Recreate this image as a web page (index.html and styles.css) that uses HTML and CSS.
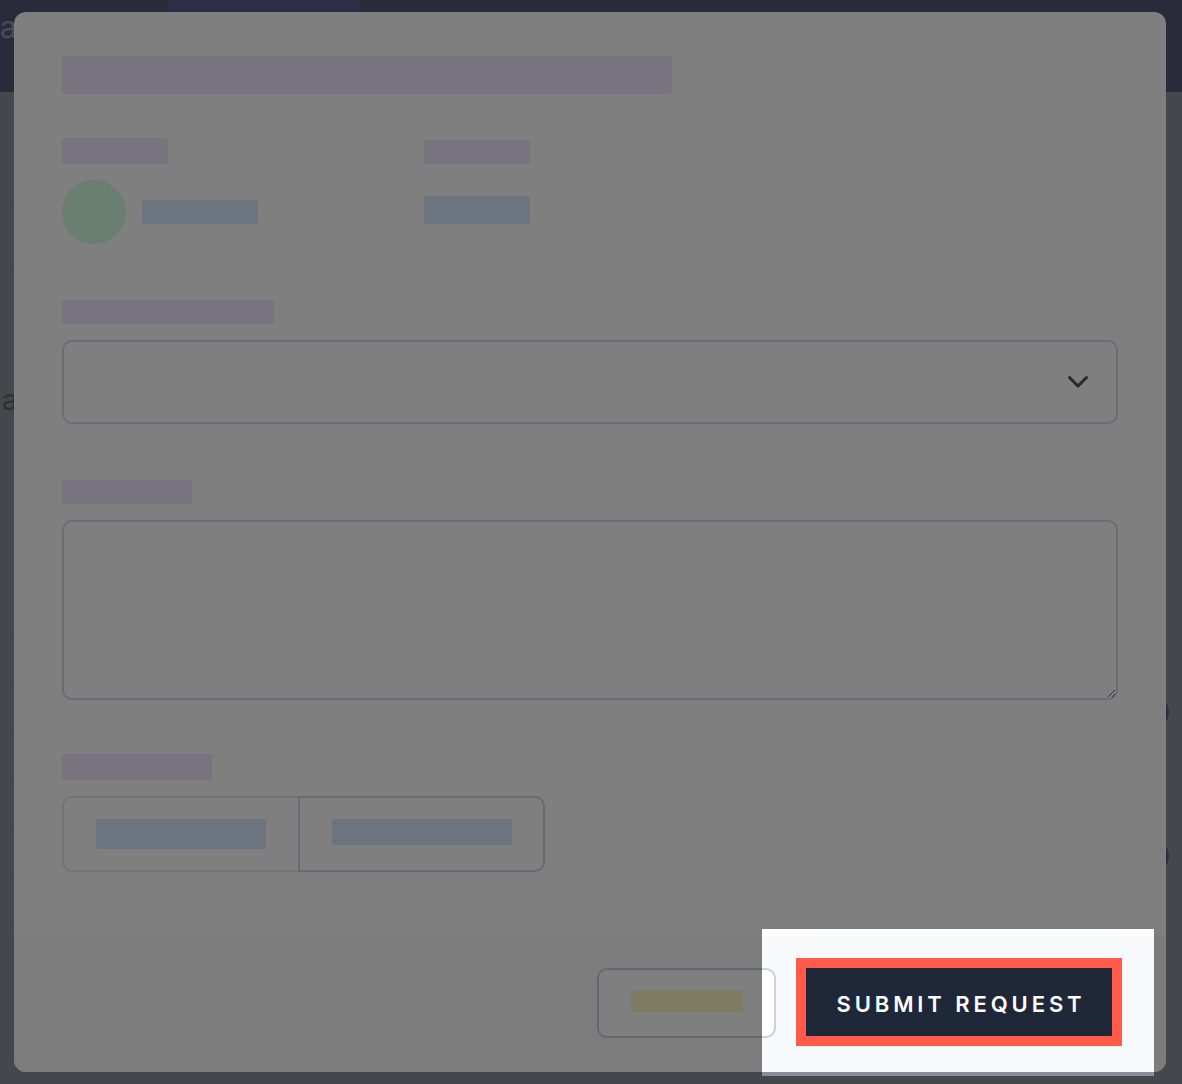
FILE: index.html
```html
<!DOCTYPE html>
<html lang="en">
<head>
    <meta charset="UTF-8">
    <meta name="viewport" content="width=device-width, initial-scale=1.0">
    <title>New Request</title>
    <link rel="stylesheet" href="styles.css">
</head>
<body>
    <!-- page behind the dialog -->
    <div class="app">
        <header class="topbar">
            <span class="brand">a</span>
            <div class="tab-active"></div>
        </header>
        <main class="page">
            <div class="row row-head"></div>
            <div class="row row-sub"></div>
            <div class="row row-main"><span class="page-text">a</span></div>
            <div class="row"></div>
            <div class="row"><span class="dot"></span></div>
            <div class="row"></div>
            <div class="row"></div>
            <div class="row"><span class="dot"></span></div>
            <div class="row"></div>
        </main>
    </div>

    <div class="backdrop">
        <div class="modal">
            <div class="modal-body">
                <div class="bar bar-title"></div>

                <div class="meta">
                    <div class="meta-col">
                        <div class="bar bar-label" style="width: 106px; height: 26px;"></div>
                        <div class="meta-value">
                            <span class="avatar"></span>
                            <div class="bar bar-value" style="width: 116px; height: 24px;"></div>
                        </div>
                    </div>
                    <div class="meta-col meta-col-2">
                        <div class="bar bar-label" style="width: 106px; height: 24px;"></div>
                        <div class="meta-value">
                            <div class="bar bar-value" style="width: 106px; height: 28px;"></div>
                        </div>
                    </div>
                </div>

                <div class="field">
                    <div class="bar bar-label" style="width: 212px; height: 24px;"></div>
                    <div class="select">
                        <svg width="22" height="14" viewBox="0 0 22 14" fill="none">
                            <path d="M2.5 2.5l8.5 8.5 8.5-8.5" stroke="currentColor" stroke-width="3" stroke-linecap="round" stroke-linejoin="round"/>
                        </svg>
                    </div>
                </div>

                <div class="field">
                    <div class="bar bar-label" style="width: 130px; height: 24px;"></div>
                    <textarea class="textarea"></textarea>
                </div>

                <div class="field field-last">
                    <div class="bar bar-label" style="width: 150px; height: 26px;"></div>
                    <div class="segments">
                        <button class="segment">
                            <span class="bar bar-value" style="width: 170px; height: 30px;"></span>
                        </button>
                        <button class="segment segment-on">
                            <span class="bar bar-value" style="width: 180px; height: 26px;"></span>
                        </button>
                    </div>
                </div>
            </div>

            <div class="modal-footer">
                <button class="btn-cancel"><span class="bar bar-cancel"></span></button>
                <button class="btn-submit">SUBMIT REQUEST</button>
            </div>
        </div>
    </div>

    <!-- tour highlight over the submit area -->
    <div class="spotlight"></div>
</body>
</html>
```

FILE: styles.css
```css
* {
    box-sizing: border-box;
}
body {
    margin: 0;
    font-family: Inter, "Liberation Sans", sans-serif;
    background: #8a8e9a;
    height: 100vh;
    overflow: hidden;
}

/* background app */
.topbar {
    height: 92px;
    background: #525674;
    display: flex;
    align-items: flex-start;
}
.brand {
    font-size: 30px;
    color: #9498b4;
    line-height: 1;
    padding-top: 12px;
    width: 168px;
}
.tab-active {
    width: 192px;
    height: 92px;
    background: #5c5e8c;
}
.row {
    height: 48px;
    border-bottom: 1px solid #858995;
    position: relative;
}
.row-head {
    height: 113px;
}
.row-sub {
    height: 65px;
}
.row-main {
    height: 370px;
    padding-top: 112px;
}
.page-text {
    font-size: 28px;
    color: #5c6068;
    padding-left: 2px;
    line-height: 36px;
}
.dot {
    position: absolute;
    right: 13px;
    top: 9px;
    width: 30px;
    height: 30px;
    border-radius: 50%;
    background: #5a5e86;
}

/* dialog */
.backdrop {
    position: fixed;
    inset: 0;
    padding: 12px 16px 12px 14px;
    display: flex;
}
.modal {
    flex: 1;
    background: #fff;
    border-radius: 12px;
    overflow: hidden;
    display: flex;
    flex-direction: column;
}
.modal-body {
    height: 924px;
    padding: 44px 48px 0;
}
.bar {
    display: block;
    border-radius: 2px;
}
.bar-title {
    width: 610px;
    height: 38px;
    background: #eee8ff;
}
.bar-label {
    background: #eee8ff;
}
.bar-value {
    background: #d8eaff;
}
.meta {
    margin-top: 44px;
    display: flex;
}
.meta-col {
    width: 362px;
    display: flex;
    flex-direction: column;
    gap: 16px;
}
.meta-col-2 {
    padding-top: 2px;
}
.meta-value {
    height: 64px;
    display: flex;
    align-items: center;
    gap: 16px;
}
.meta-col-2 .meta-value {
    margin-top: -2px;
}
.avatar {
    width: 64px;
    height: 64px;
    border-radius: 50%;
    background: #d4ffe4;
}
.field {
    margin-top: 56px;
    display: flex;
    flex-direction: column;
    gap: 16px;
}
.field-last {
    margin-top: 54px;
}
.select {
    height: 84px;
    border: 2px solid #d8d8e6;
    border-radius: 10px;
    display: flex;
    align-items: center;
    justify-content: flex-end;
    padding-right: 27px;
    color: #4e5060;
}
.textarea {
    height: 180px;
    width: 100%;
    border: 2px solid #d8d8e6;
    border-radius: 10px;
    font: inherit;
    resize: vertical;
    outline: none;
}
.segments {
    display: flex;
    height: 76px;
}
.segment {
    background: #fff;
    display: flex;
    align-items: center;
    margin: 0;
    padding: 0;
    cursor: pointer;
}
.segment:first-child {
    width: 236px;
    border: 2px solid #e8e8ee;
    border-right: none;
    border-radius: 10px 0 0 10px;
    padding-left: 32px;
}
.segment-on {
    width: 247px;
    border: 2px solid #d4d4e2;
    border-radius: 0 10px 10px 0;
    padding-left: 32px;
    padding-bottom: 4px;
}

.modal-footer {
    flex: 1;
    background: #f8f9fb;
    display: flex;
    justify-content: flex-end;
    align-items: flex-start;
    gap: 30px;
    padding: 32px 54px 0 0;
}
.btn-cancel {
    width: 179px;
    height: 70px;
    background: #fff;
    border: 2px solid #cdd0da;
    border-radius: 10px;
    display: flex;
    align-items: center;
    justify-content: center;
    padding: 0 0 4px;
}
.bar-cancel {
    width: 112px;
    height: 22px;
    background: #fef4c4;
}
.btn-submit {
    width: 306px;
    height: 68px;
    background: #1f2839;
    color: #fff;
    border: none;
    border-radius: 0;
    font-family: Inter, "Liberation Sans", sans-serif;
    font-size: 22px;
    font-weight: 600;
    letter-spacing: 3.9px;
    padding: 4px 0 0 4px;
    outline: 10px solid #ff5a4a;
}

.spotlight {
    position: fixed;
    left: 762px;
    top: 929px;
    width: 392px;
    height: 147px;
    box-shadow: 0 0 0 3000px rgba(0, 0, 0, 0.5);
    pointer-events: none;
}
```
